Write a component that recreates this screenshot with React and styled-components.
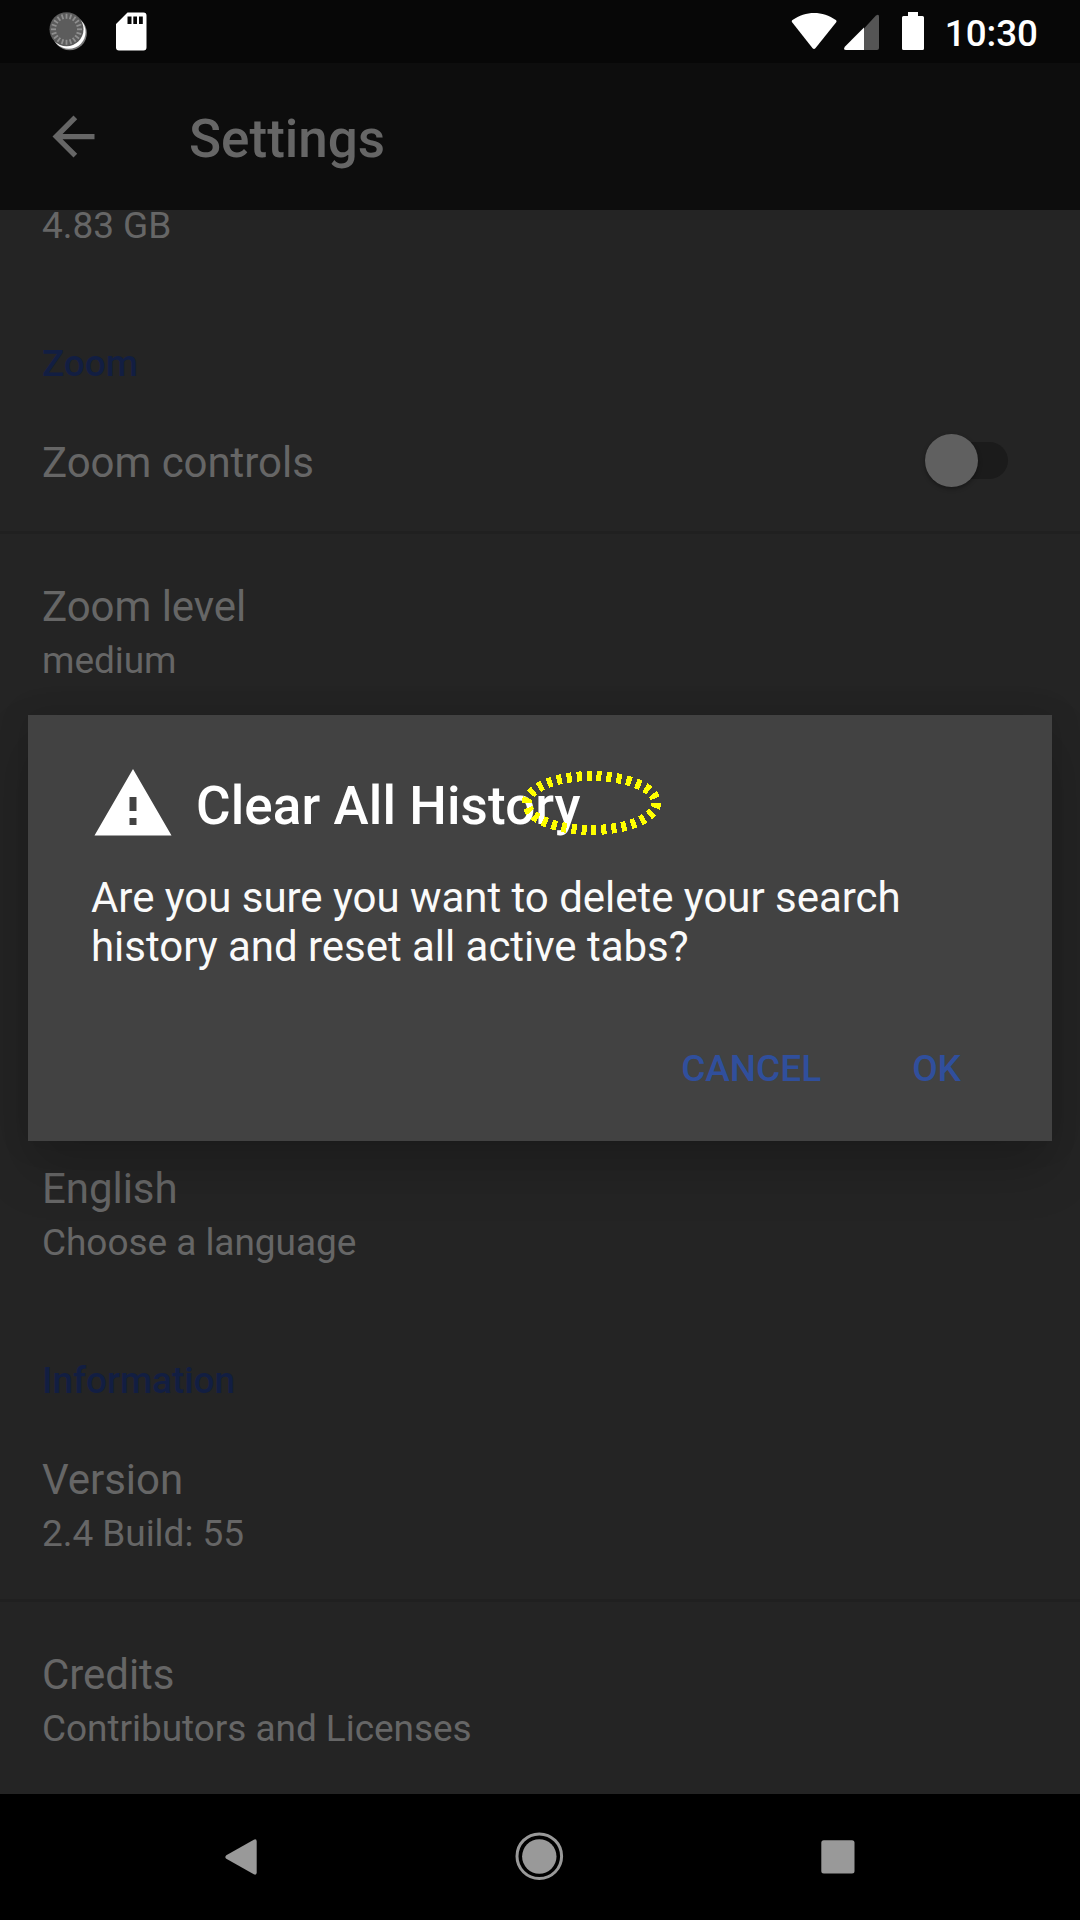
import React from "react";
import styled, { createGlobalStyle } from "styled-components";

const GlobalStyle = createGlobalStyle`
  html, body { margin: 0; padding: 0; background: #000; }
  *, *::before, *::after { box-sizing: border-box; }
  svg { display: block; flex: none; }
`;

const Screen = styled.div`
  position: relative;
  display: flex;
  flex-direction: column;
  width: 1080px;
  height: 1920px;
  overflow: hidden;
  background: #242424;
  color: #666666;
  font-family: Roboto, "Noto Sans", sans-serif;
`;

const StatusBar = styled.header`
  flex: none;
  display: flex;
  justify-content: space-between;
  height: 63px;
  padding: 0 42px 0 48px;
  background: #070707;
`;

const StatusGroup = styled.div`
  display: flex;
`;

const Clock = styled.span`
  margin: 12px 0 0 19px;
  color: #fff;
  font-size: 36.75px;
  font-weight: 500;
  line-height: 43px;
`;

const AppBar = styled.div`
  flex: none;
  display: flex;
  align-items: center;
  gap: 84px;
  height: 147px;
  padding-left: 42px;
  background: #0d0d0d;
`;

const BarTitle = styled.h1`
  margin: 4px 0 0;
  font-size: 53px;
  font-weight: 500;
  line-height: 62px;
`;

const List = styled.main`
  flex: 1;
  display: flex;
  flex-direction: column;
  justify-content: flex-end;
  min-height: 0;
`;

const Section = styled.section`
  flex: none;
  height: ${(p) => (p.$height ? `${p.$height}px` : "auto")};
`;

const SectionTitle = styled.h2`
  height: 99px;
  margin: 0;
  padding: 51px 42px 0;
  color: #121e42;
  font-size: 37px;
  font-weight: 500;
  line-height: 43px;
  letter-spacing: -0.06px;
`;

const Row = styled.div`
  display: flex;
  justify-content: space-between;
  align-items: center;
  padding: 48px 72px 44px 42px;
  ${(p) => p.$divided && "border-bottom: 3px solid #202020;"}
`;

const RowText = styled.div`
  display: flex;
  flex-direction: column;
  gap: 8px;
`;

const Primary = styled.span`
  font-size: 42px;
  line-height: 49px;
  letter-spacing: -0.05px;
`;

const Secondary = styled.span`
  font-size: 37px;
  line-height: 43px;
  letter-spacing: -0.05px;
`;

const Track = styled.div`
  display: flex;
  align-items: center;
  width: 83px;
  height: 37px;
  margin: -2px 0 2px;
  border-radius: 19px;
  background: #1b1b1b;
`;

const Thumb = styled.div`
  flex: none;
  width: 53px;
  height: 53px;
  border-radius: 50%;
  background: #606060;
  box-shadow: 0 2px 4px rgba(0, 0, 0, 0.35);
`;

const NavBar = styled.nav`
  flex: none;
  display: flex;
  justify-content: space-between;
  height: 126px;
  padding: 31px 210px 0;
  background: #000;
`;

const Dialog = styled.div`
  position: absolute;
  top: 715px;
  left: 28px;
  width: 1024px;
  height: 426px;
  padding: 47px 63px 51px;
  display: flex;
  flex-direction: column;
  background: #424242;
  color: #fff;
  box-shadow: 0 28px 50px rgba(0, 0, 0, 0.18), 0 0 30px rgba(0, 0, 0, 0.12);
`;

const DialogHeader = styled.div`
  display: flex;
  align-items: center;
  gap: 21px;
  height: 84px;
`;

const DialogTitle = styled.h2`
  margin: 4px 0 0;
  font-size: 53px;
  font-weight: 500;
  line-height: 62px;
  letter-spacing: 0.1px;
`;

const Message = styled.p`
  margin: 27px 0 0;
  font-size: 42px;
  line-height: 49px;
  letter-spacing: -0.03px;
  color: #fafafa;
`;

const Actions = styled.div`
  display: flex;
  justify-content: flex-end;
  gap: 91px;
  margin-top: auto;
  padding-right: 28px;
`;

const Action = styled.button`
  padding: 0;
  border: 0;
  background: none;
  color: #304f9c;
  font: 500 37px/43px Roboto, "Noto Sans", sans-serif;
`;

const Marker = styled.svg`
  position: absolute;
  top: 54px;
  left: 492px;
`;

const ticks = Array.from({ length: 20 }, (_, i) => i * 18);

const SyncIcon = () => (
  <svg width="68" height="63" viewBox="48 0 68 63">
    <circle cx="69.7" cy="33.100" r="17.200" fill="#777" />
    <circle cx="68.8" cy="32" r="16.8" fill="#fff" />
    <circle cx="66.5" cy="29.3" r="17" fill="#5c5c5c" />
    {ticks.map((a) => (
      <path key={a} d="M66.5 13.8v5" stroke="#8f8f8f" strokeWidth="1.8" transform={`rotate(${a} 66.5 29.3)`} />
    ))}
  </svg>
);

const SdIcon = () => (
  <svg width="40" height="63" viewBox="116 0 40 63">
    <path
      fill="#fff"
      fillRule="evenodd"
      d="M127.5 12.5H143.500a3 3 0 0 1 3 3V47.500a3 3 0 0 1-3 3H119a3 3 0 0 1-3-3V24ZM127.500 16.500V24H131.500V16.500ZM133.300 16.500V24H137V16.500ZM139 16.500V24H142.800V16.500Z"
    />
  </svg>
);

const SignalIcons = () => (
  <svg width="136" height="63" viewBox="790 0 136 63">
    <path fill="#fff" d="M792.3 22.6C791.6 21.7 791.5 20.800 792.500 20C805.500 10.600 822.800 10.600 835.800 20C836.700 20.800 836.700 21.700 836 22.600L815.400 48.200Q814 49.700 812.600 48.200Z" />
    <path fill="#555" d="M864 28.500L875.700 15.800Q879 13.300 879 16.500V48Q879 50 877 50H864Z" />
    <path fill="#fff" d="M864 27.500V50H846Q842.800 50 844.800 46.700Z" />
    <path fill="#fff" d="M908 12h10v4h4.500q1.500 0 1.500 1.500V48.500q0 1.500-1.500 1.500h-19q-1.500 0-1.500-1.500V17.500q0-1.500 1.500-1.500H908Z" />
  </svg>
);

const BackIcon = () => (
  <svg width="63" height="63" viewBox="0 0 24 24" fill="#666">
    <path d="M20 11H7.830l5.590-5.590L12 4l-8 8 8 8 1.410-1.410L7.830 13H20v-2z" />
  </svg>
);

const WarningIcon = () => (
  <svg width="84" height="84" viewBox="0 0 24 24" fill="#fff">
    <path d="M1 21h22L12 2 1 21zm12-3h-2v-2h2v2zm0-4h-2v-4h2v4z" />
  </svg>
);

const NavBack = () => (
  <svg width="62" height="62" viewBox="210 1825 62 62">
    <path fill="#999" d="M226.300 1855.200L253.800 1839.700Q256.700 1838.500 256.700 1841.500V1872.500Q256.700 1875.500 253.800 1874.300L226.300 1858.800Q224.300 1857 226.300 1855.200Z" />
  </svg>
);

const NavHome = () => (
  <svg width="62" height="62" viewBox="509 1825 62 62">
    <circle cx="539.300" cy="1856.200" r="22.300" fill="none" stroke="#999" strokeWidth="3" />
    <circle cx="539.300" cy="1856.500" r="17.200" fill="#999" />
  </svg>
);

const NavRecent = () => (
  <svg width="62" height="62" viewBox="808 1825 62 62">
    <rect x="821.300" y="1840.300" width="33.200" height="33.300" rx="2.500" fill="#999" />
  </svg>
);

const Item = ({ title, detail, divided, children }) => (
  <Row $divided={divided}>
    <RowText>
      <Primary>{title}</Primary>
      {detail && <Secondary>{detail}</Secondary>}
    </RowText>
    {children}
  </Row>
);

export default function App() {
  return (
    <Screen>
      <GlobalStyle />
      <StatusBar>
        <StatusGroup>
          <SyncIcon />
          <SdIcon />
        </StatusGroup>
        <StatusGroup>
          <SignalIcons />
          <Clock>10:30</Clock>
        </StatusGroup>
      </StatusBar>
      <AppBar>
        <BackIcon />
        <BarTitle>Settings</BarTitle>
      </AppBar>
      <List>
        <Row>
          <Secondary>4.83 GB</Secondary>
        </Row>
        <Section $height={825}>
          <SectionTitle>Zoom</SectionTitle>
          <Item title="Zoom controls" divided>
            <Track>
              <Thumb />
            </Track>
          </Item>
          <Item title="Zoom level" detail="medium" />
        </Section>
        <Section>
          <Item title="English" detail="Choose a language" />
        </Section>
        <Section>
          <SectionTitle>Information</SectionTitle>
          <Item title="Version" detail="2.4 Build: 55" divided />
          <Item title="Credits" detail="Contributors and Licenses" />
        </Section>
      </List>
      <NavBar>
        <NavBack />
        <NavHome />
        <NavRecent />
      </NavBar>
      <Dialog role="dialog">
        <DialogHeader>
          <WarningIcon />
          <DialogTitle>Clear All History</DialogTitle>
        </DialogHeader>
        <Message>
          Are you sure you want to delete your search history and reset all active tabs?
        </Message>
        <Actions>
          <Action>CANCEL</Action>
          <Action>OK</Action>
        </Actions>
        <Marker width="144" height="68" viewBox="520 769 144 68" shapeRendering="crispEdges">
          <ellipse cx="591.500" cy="803" rx="64.700" ry="27" fill="none" stroke="#ff0" strokeWidth="10" strokeDasharray="5 5" />
        </Marker>
      </Dialog>
    </Screen>
  );
}
